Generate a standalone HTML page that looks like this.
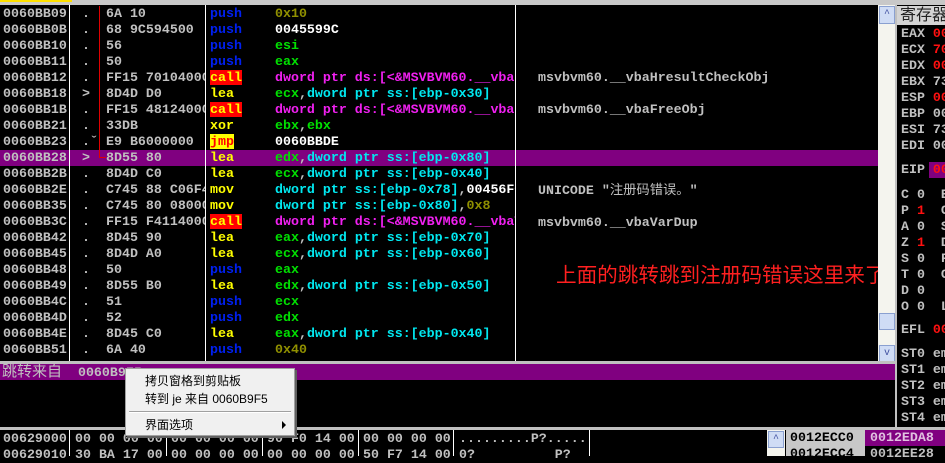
<!DOCTYPE html>
<html><head><meta charset="utf-8"><style>
*{margin:0;padding:0}
body{width:945px;height:456px;background:#000;overflow:hidden;position:relative;font-family:"Liberation Mono","DejaVu Sans Mono",monospace;font-size:13.3px;color:#c0c0c0}
.a{position:absolute;white-space:pre;line-height:16px;font-weight:bold}
.cj{font-family:"Liberation Sans","WenQuanYi Zen Hei","Noto Sans CJK SC",sans-serif;font-weight:normal}
.v{position:absolute;background:#fff;width:1px}
.h{position:absolute;background:#c0c0c0;height:3px}
.bl{color:#0020f0}.ye{color:#ffff00}.gr{color:#00e000}.mg{color:#f020f0}.cy{color:#00e8f0}.wh{color:#fff}.ol{color:#909000}.rd{color:#ff1010}
.cl{background:#ff0000;color:#ffff00}.jp{background:#ffff00;color:#ff0000}
</style></head><body>
<div style="position:absolute;left:0;top:0;width:945px;height:5px;background:#c8c8c8"></div>
<div style="position:absolute;left:0;top:0;width:72px;height:2px;background:#ffe000"></div>
<div style="position:absolute;left:0;top:150px;width:878px;height:16px;background:#800080"></div>
<div class="v" style="left:69px;top:5px;height:357px"></div>
<div class="v" style="left:205px;top:5px;height:357px"></div>
<div class="v" style="left:515px;top:5px;height:357px"></div>
<div style="position:absolute;left:99px;top:6px;width:1px;height:152px;background:#e00000"></div>
<div style="position:absolute;left:99px;top:157px;width:7px;height:1px;background:#e00000"></div>
<div class="a" style="left:3px;top:6px">0060BB09
0060BB0B
0060BB10
0060BB11
0060BB12
0060BB18
0060BB1B
0060BB21
0060BB23
0060BB28
0060BB2B
0060BB2E
0060BB35
0060BB3C
0060BB42
0060BB45
0060BB48
0060BB49
0060BB4C
0060BB4D
0060BB4E
0060BB51</div>
<div class="a" style="left:82px;top:6px">.
.
.
.
.
>
.
.
.ˇ
>
.
.
.
.
.
.
.
.
.
.
.
.</div>
<div class="a" style="left:106px;top:6px;width:99px;overflow:hidden">6A 10
68 9C594500
56
50
FF15 70104000
8D4D D0
FF15 48124000
33DB
E9 B6000000
8D55 80
8D4D C0
C745 88 C06F4
C745 80 08000
FF15 F4114000
8D45 90
8D4D A0
50
8D55 B0
51
52
8D45 C0
6A 40</div>
<div class="a" style="left:210px;top:6px"><span class="bl">push</span>
<span class="bl">push</span>
<span class="bl">push</span>
<span class="bl">push</span>
<span class="cl">call</span>
<span class="ye">lea</span>
<span class="cl">call</span>
<span class="ye">xor</span>
<span class="jp">jmp</span>
<span class="ye">lea</span>
<span class="ye">lea</span>
<span class="ye">mov</span>
<span class="ye">mov</span>
<span class="cl">call</span>
<span class="ye">lea</span>
<span class="ye">lea</span>
<span class="bl">push</span>
<span class="ye">lea</span>
<span class="bl">push</span>
<span class="bl">push</span>
<span class="ye">lea</span>
<span class="bl">push</span></div>
<div class="a" style="left:275px;top:6px;width:240px;overflow:hidden"><span class="ol">0x10</span>
<span class="wh">0045599C</span>
<span class="gr">esi</span>
<span class="gr">eax</span>
<span class="mg">dword ptr ds:[&lt;&amp;MSVBVM60.__vbaHresultCheckObj&gt;]</span>
<span class="gr">ecx</span>,<span class="cy">dword ptr ss:[ebp-0x30]</span>
<span class="mg">dword ptr ds:[&lt;&amp;MSVBVM60.__vbaFreeObj&gt;]</span>
<span class="gr">ebx</span>,<span class="gr">ebx</span>
<span class="wh">0060BBDE</span>
<span class="gr">edx</span>,<span class="cy">dword ptr ss:[ebp-0x80]</span>
<span class="gr">ecx</span>,<span class="cy">dword ptr ss:[ebp-0x40]</span>
<span class="cy">dword ptr ss:[ebp-0x78]</span>,<span class="wh">00456FC0</span>
<span class="cy">dword ptr ss:[ebp-0x80]</span>,<span class="ol">0x8</span>
<span class="mg">dword ptr ds:[&lt;&amp;MSVBVM60.__vbaVarDup&gt;]</span>
<span class="gr">eax</span>,<span class="cy">dword ptr ss:[ebp-0x70]</span>
<span class="gr">ecx</span>,<span class="cy">dword ptr ss:[ebp-0x60]</span>
<span class="gr">eax</span>
<span class="gr">edx</span>,<span class="cy">dword ptr ss:[ebp-0x50]</span>
<span class="gr">ecx</span>
<span class="gr">edx</span>
<span class="gr">eax</span>,<span class="cy">dword ptr ss:[ebp-0x40]</span>
<span class="ol">0x40</span></div>
<div class="a" style="left:538px;top:70px">msvbvm60.__vbaHresultCheckObj

msvbvm60.__vbaFreeObj</div>
<div class="a" style="left:538px;top:182px">UNICODE "<span class="cj">注册码错误。</span>"

msvbvm60.__vbaVarDup</div>
<div class="a cj" style="left:556px;top:263px;font-size:20.6px;line-height:26px;color:#ff2020">上面的跳转跳到注册码错误这里来了</div>
<div style="position:absolute;left:878px;top:5px;width:17px;height:357px;background:#f4f4ee"></div>
<div style="position:absolute;left:879px;top:6px;width:14px;height:16px;background:#cfdcf5;border:1px solid #8aa0d0;color:#4050a0;font-size:10px;text-align:center;line-height:16px">^</div>
<div style="position:absolute;left:879px;top:313px;width:14px;height:15px;background:#cfdcf5;border:1px solid #8aa0d0"></div>
<div style="position:absolute;left:879px;top:345px;width:14px;height:16px;background:#cfdcf5;border:1px solid #8aa0d0;color:#4050a0;font-size:10px;text-align:center;line-height:16px">v</div>
<div class="h" style="left:0;top:361px;width:897px"></div>
<div style="position:absolute;left:0;top:364px;width:895px;height:16px;background:#800080"></div>
<div class="a" style="left:2px;top:364px"><span class="cj" style="font-size:15px">跳转来自</span>  0060B9F5</div>
<div class="h" style="left:0;top:427px;width:945px"></div>
<div class="v" style="left:69px;top:430px;height:26px"></div>
<div class="v" style="left:166px;top:430px;height:26px"></div>
<div class="v" style="left:262px;top:430px;height:26px"></div>
<div class="v" style="left:358px;top:430px;height:26px"></div>
<div class="v" style="left:453px;top:430px;height:26px"></div>
<div class="v" style="left:589px;top:430px;height:26px"></div>
<div class="a" style="left:3px;top:431px">00629000
00629010</div>
<div class="a" style="left:75px;top:431px">00 00 00 00
30 BA 17 00</div>
<div class="a" style="left:171px;top:431px">00 00 00 00
00 00 00 00</div>
<div class="a" style="left:267px;top:431px">90 F0 14 00
00 00 00 00</div>
<div class="a" style="left:363px;top:431px">00 00 00 00
50 F7 14 00</div>
<div class="a" style="left:459px;top:431px">.........P?.....
0?          P?</div>
<div style="position:absolute;left:767px;top:430px;width:18px;height:26px;background:#f4f4ee"></div>
<div style="position:absolute;left:768px;top:431px;width:14px;height:15px;background:#cfdcf5;border:1px solid #8aa0d0;color:#4050a0;font-size:10px;text-align:center;line-height:15px">^</div>
<div style="position:absolute;left:786px;top:430px;width:79px;height:26px;background:#c8c8c8"></div>
<div style="position:absolute;left:865px;top:430px;width:80px;height:16px;background:#800080"></div>
<div class="a" style="left:790px;top:430px;color:#000">0012ECC0
0012ECC4</div>
<div class="a" style="left:870px;top:430px;color:#e0c0e0">0012EDA8
<span style="color:#c0c0c0">0012EE28</span></div>
<div class="v" style="left:895px;top:5px;height:422px;background:#c0c0c0;width:2px"></div>
<div style="position:absolute;left:897px;top:6px;width:48px;height:19px;background:#d4d4d4"></div>
<div class="a cj" style="left:900px;top:5px;font-size:16px;line-height:21px;color:#222">寄存器</div>
<div style="position:absolute;left:929px;top:162px;width:16px;height:16px;background:#800080"></div>
<div class="a" style="left:901px;top:26px">EAX <span class="rd">00</span>
ECX <span class="rd">70</span>
EDX <span class="rd">00</span>
EBX 73
ESP <span class="rd">00</span>
EBP 00
ESI 73
EDI 00</div>
<div class="a" style="left:901px;top:162px">EIP <span class="rd">00</span></div>
<div class="a" style="left:901px;top:187px">C 0  E
P <span class="rd">1</span>  C
A 0  S
Z <span class="rd">1</span>  D
S 0  F
T 0  C
D 0
O 0  L</div>
<div class="a" style="left:901px;top:322px">EFL <span class="rd">00</span></div>
<div class="a" style="left:901px;top:346px">ST0 em
ST1 em
ST2 em
ST3 em
ST4 em</div>
<div style="position:absolute;left:125px;top:368px;width:168px;height:66px;background:#f0f0f0;border:1px solid #a0a0a0;box-shadow:2px 2px 0 #606060"></div>
<div class="a cj" style="left:145px;top:372px;color:#000;font-size:12px;line-height:18px">拷贝窗格到剪贴板</div>
<div class="a cj" style="left:145px;top:390px;color:#000;font-size:12px;line-height:18px">转到 je 来自 0060B9F5</div>
<div style="position:absolute;left:129px;top:411px;width:162px;height:1px;background:#a0a0a0"></div>
<div style="position:absolute;left:129px;top:412px;width:162px;height:1px;background:#fff"></div>
<div class="a cj" style="left:145px;top:416px;color:#000;font-size:12px;line-height:18px">界面选项</div>
<div style="position:absolute;left:282px;top:421px;width:0;height:0;border-left:4px solid #000;border-top:4px solid transparent;border-bottom:4px solid transparent"></div>
</body></html>
